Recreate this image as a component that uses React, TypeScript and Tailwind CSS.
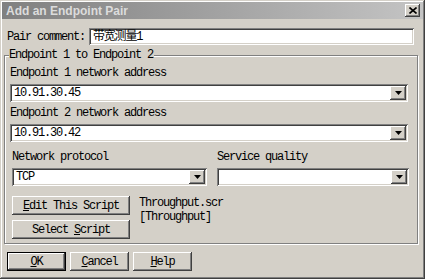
const FONT = "font-['Liberation_Mono','Noto_Sans_CJK_SC',monospace] text-[12px] leading-[12px] tracking-[-1.2px] text-black"
const SUNKEN = 'bg-white shadow-[inset_1px_1px_#808080,inset_-1px_-1px_#ffffff,inset_2px_2px_#404040,inset_-2px_-2px_#d4d0c8]'
const RAISED = 'bg-[#d4d0c8] shadow-[inset_-1px_-1px_#404040,inset_1px_1px_#ffffff,inset_-2px_-2px_#808080,inset_2px_2px_#d4d0c8]'

function Arrow() {
  return (
    <svg width="7" height="4" viewBox="0 0 7 4">
      <path d="M0 0h7L3.5 4Z" fill="black" />
    </svg>
  )
}

function Combo({ value, className = '' }: { value: string; className?: string }) {
  return (
    <div className={`flex h-[18px] p-[2px] ${SUNKEN} ${className}`}>
      <div className="flex flex-1 items-center pl-[2px]">{value}</div>
      <div className={`flex w-[16px] items-center justify-center ${RAISED}`}>
        <Arrow />
      </div>
    </div>
  )
}

function Button({ children, className = '' }: { children: React.ReactNode; className?: string }) {
  return <div className={`flex h-[19px] items-center justify-center ${RAISED} ${className}`}>{children}</div>
}

export default function App() {
  return (
    <div
      className={`flex h-[279px] w-[425px] flex-col bg-[#d4d0c8] p-[2px] shadow-[inset_-1px_-1px_#404040,inset_1px_1px_#d4d0c8,inset_-2px_-2px_#808080,inset_2px_2px_#ffffff] ${FONT}`}
    >
      {/* title bar */}
      <div className="flex h-[17px] items-center justify-between bg-gradient-to-r from-[#808080] to-[#c4c4c4] pl-[4px] pr-[3px]">
        <span className="font-['Liberation_Sans',Arial,sans-serif] text-[12px] font-bold tracking-normal text-[#dcdcdc]">
          Add an Endpoint Pair
        </span>
        <div className={`flex h-[13px] w-[15px] items-center justify-center ${RAISED}`}>
          <svg width="8" height="7" viewBox="0 0 8 7">
            <path d="M0.5 0.5 7.5 6.5M7.5 0.5 0.5 6.5" stroke="black" strokeWidth="1.6" />
          </svg>
        </div>
      </div>

      {/* pair comment */}
      <div className="mt-[9px] flex items-center pl-[5px] pr-[9px]">
        <span className="w-[82px]">Pair comment:</span>
        <div className={`flex h-[17px] flex-1 items-center pl-[4px] ${SUNKEN}`}>带宽测量1</div>
      </div>

      {/* group */}
      <div className="relative ml-[2px] mr-[5px] mt-[10px] flex h-[189px] flex-col border border-[#808080] px-[5px] shadow-[1px_1px_#ffffff,inset_1px_1px_#ffffff]">
        <span className="absolute -top-[7px] left-[4px] bg-[#d4d0c8] pr-[1px]">Endpoint 1 to Endpoint 2</span>
        <span className="mt-[11px]">Endpoint 1 network address</span>
        <Combo value="10.91.30.45" className="mt-[5px] mr-[4px]" />
        <span className="mt-[5px]">Endpoint 2 network address</span>
        <Combo value="10.91.30.42" className="mt-[5px] mr-[4px]" />

        <div className="ml-[2px] mr-[3px] mt-[9px] flex gap-[10px]">
          <div className="flex w-[195px] flex-col">
            <span>Network protocol</span>
            <Combo value="TCP" className="mt-[5px]" />
          </div>
          <div className="flex flex-1 flex-col">
            <span>Service quality</span>
            <Combo value="" className="mt-[5px]" />
          </div>
        </div>

        <div className="ml-[2px] mt-[10px] flex gap-[9px]">
          <div className="flex w-[118px] flex-col gap-[5px]">
            <Button>
              <span>
                <u>E</u>dit This Script
              </span>
            </Button>
            <Button>
              <span>
                Select <u>S</u>cript
              </span>
            </Button>
          </div>
          <div className="flex flex-col gap-[2px] pt-[1px]">
            <span>Throughput.scr</span>
            <span>[Throughput]</span>
          </div>
        </div>
      </div>

      {/* bottom buttons */}
      <div className="ml-[5px] mt-[8px] flex gap-[4px]">
        <div className="flex h-[19px] w-[59px] items-center justify-center bg-[#d4d0c8] shadow-[inset_0_0_0_1px_#000000,inset_-2px_-2px_#404040,inset_2px_2px_#ffffff,inset_-3px_-3px_#808080]">
          <span>
            <u>O</u>K
          </span>
        </div>
        <Button className="w-[59px]">
          <span>
            <u>C</u>ancel
          </span>
        </Button>
        <Button className="w-[59px]">
          <span>
            <u>H</u>elp
          </span>
        </Button>
      </div>
    </div>
  )
}
